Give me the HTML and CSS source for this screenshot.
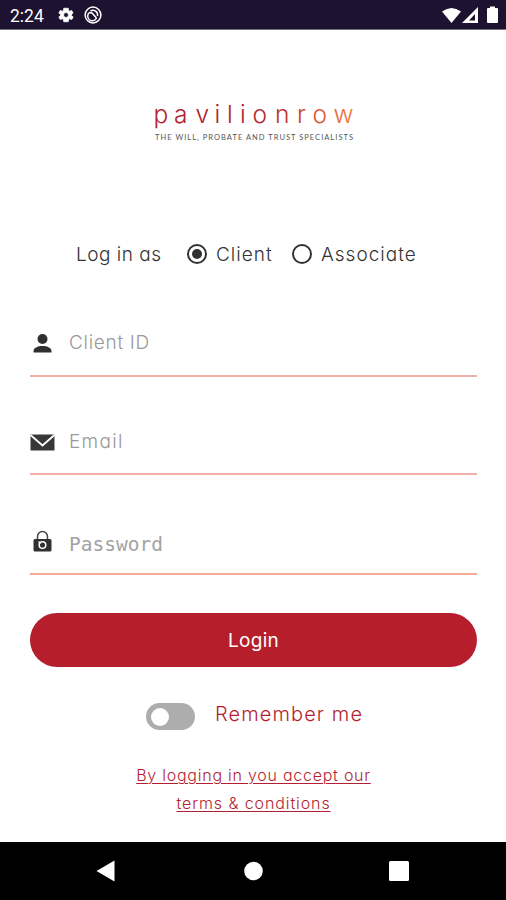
FILE: index.html
```html
<!DOCTYPE html>
<html lang="en">
<head>
<meta charset="utf-8">
<title>Pavilion Row login</title>
<link rel="stylesheet" href="styles.css">
</head>
<body>
<header class="status">
  <span class="time">2:24</span>
  <svg class="gear" width="18" height="18" viewBox="0 0 24 24"><path fill="#fff" stroke="#fff" fill-rule="evenodd" d="M19.4 13c.1-.7.1-1.300 0-2l2.100-1.600-2-3.500-2.500 1a8 8 0 0 0-1.700-1L15 3H9l-.4 2.900a8 8 0 0 0-1.700 1l-2.500-1-2 3.500L4.600 11c-.1.700-.1 1.300 0 2l-2.200 1.600 2 3.500 2.500-1a8 8 0 0 0 1.700 1L9 21h6l.4-2.900a8 8 0 0 0 1.700-1l2.500 1 2-3.500zM12 15.300a3.300 3.300 0 1 1 0-6.600 3.300 3.300 0 0 1 0 6.600z"/></svg>
  <svg class="sync" width="18" height="18" viewBox="0 0 18 18" fill="none" stroke="#fff"><circle cx="9" cy="9" r="7.900" stroke-width="1.500"/><path stroke-width="1.500" d="M5.500 6.500a4.600 4.600 0 1 0 7 5.500M5 6.500l3 .5 4.500 5M6.500 5a4.700 4.700 0 0 1 7 5"/></svg>
  <svg class="signals" width="58" height="20" viewBox="0 0 58 20"><path fill="#fff" d="M1 6.500Q10.500-.5 20 6.500L10.500 18z"/><path fill="#fff" fill-rule="evenodd" d="M37 2v16H21zM34 9l-6 6.500h6z"/><path fill="#fff" d="M47 3h2V1.500h5V3h2q1 0 1 1v13q0 1-1 1h-9q-1 0-1-1V4q0-1 1-1z"/></svg>
</header>
<main>
  <svg class="logo" width="206" height="50" viewBox="150 96 206 50" role="img">
    <defs><linearGradient id="brand" gradientUnits="userSpaceOnUse" x1="154" x2="352" y1="0" y2="0"><stop offset="0" stop-color="#b3202e"/><stop offset=".45" stop-color="#a8202c"/><stop offset=".72" stop-color="#c9382f"/><stop offset="1" stop-color="#f0793f"/></linearGradient></defs>
    <text class="name" fill="url(#brand)" y="123" x="153.500 174 195.500 214.500 227 240 252.500 275 297 312.500 333.500">pavilionrow</text>
    <text class="tagline" x="155" y="140" textLength="198">THE WILL, PROBATE AND TRUST SPECIALISTS</text>
  </svg>
  <div class="roles">
    <span class="lead">Log in as</span>
    <span class="radio on"></span><span class="client">Client</span>
    <span class="radio"></span><span class="associate">Associate</span>
  </div>
  <div class="field id">
    <svg width="25" height="24" viewBox="0 0 25 24" fill="#303030"><circle cx="12.500" cy="8" r="5"/><path d="M3.500 21.500v-1.500c0-3 4-5 9-5s9 2 9 5v1.500z"/></svg>
    <span>Client ID</span>
  </div>
  <div class="field email">
    <svg width="25" height="24" viewBox="0 0 25 24"><path fill="#383838" d="M.5 4.500h24v16H.5z"/><path fill="none" stroke="#fff" stroke-width="1.900" d="M.5 5l12 10.500L24.500 5"/></svg>
    <span>Email</span>
  </div>
  <div class="field password">
    <svg width="25" height="24" viewBox="0 0 25 24"><path fill="none" stroke="#444" stroke-width="1.500" d="M7.500 11V6.500a5 5 0 0 1 10 0V11"/><rect x="3.500" y="9" width="18" height="12.500" rx="1.500" fill="#303030"/><circle cx="12.500" cy="15" r="3.300" fill="none" stroke="#fff" stroke-width="1.500"/><path stroke="#fff" stroke-width="1.200" d="M8.500 11.500l2 2"/></svg>
    <span>Password</span>
  </div>
  <div class="login"><span>Login</span></div>
  <div class="remember"><span class="toggle"></span><span class="label">Remember me</span></div>
  <div class="terms"><div class="first">By logging in you accept our</div><div class="second">terms &amp; conditions</div></div>
</main>
<footer class="nav">
  <svg width="20" height="24" viewBox="0 0 20 24"><path fill="#fff" d="M.5 12L18.500 1.500v21z"/></svg>
  <svg width="20" height="20" viewBox="0 0 20 20"><circle cx="10.500" cy="10" r="9.300" fill="#fff"/></svg>
  <svg width="20" height="20" viewBox="0 0 20 20"><rect width="20" height="20" rx="1.500" fill="#fff"/></svg>
</footer>
</body>
</html>
```
FILE: styles.css
```css
* { box-sizing: border-box; }
body {
  margin: 0;
  height: 900px;
  display: flex;
  flex-direction: column;
  background: #fff;
  color: #333;
  font-family: Inter, sans-serif;
  font-feature-settings: "cv11", "ss03";
  font-weight: 300;
  font-size: 19px;
  white-space: nowrap;
  overflow: hidden;
}
.status {
  height: 30px;
  flex: none;
  display: flex;
  align-items: center;
  padding: 1px 7px 0 10px;
  background: #1d122f;
  border-bottom: 1px solid #77717f;
  color: #fff;
}
.time { width: 47px; font: 400 17.500px Roboto, sans-serif; padding-top: 2px; }
.sync { margin-left: 9px; }
.signals { margin-left: auto; }
main { height: 812px; flex: none; padding: 66px 29px 0 30px; }
.logo { display: block; margin-left: 120px; }
.name { font: 300 24.500px Inter, sans-serif; }
.tagline { font: 400 7.500px Lato, sans-serif; fill: #555; }
.roles { display: flex; align-items: center; height: 30px; margin: 93px 0 0 46px; }
.lead { width: 111px; letter-spacing: .5px; }
.radio { flex: none; width: 20px; height: 20px; border: 2px solid #333; border-radius: 50%; padding: 3px; }
.on::after { content: ""; display: block; width: 10px; height: 10px; border-radius: 50%; background: #303030; }
.client { width: 85px; padding-left: 9px; letter-spacing: 1px; }
.associate { padding-left: 9px; letter-spacing: 1px; }
.field {
  display: flex;
  align-items: center;
  height: 68px;
  gap: 14px;
  border-bottom: 2px solid #f0b0a6;
  color: #999;
  letter-spacing: .7px;
}
.id { margin-top: 40px; }
.id svg { margin-top: 2px; }
.email { margin-top: 30px; letter-spacing: 1.300px; }
.email svg { margin-top: 4px; }
.email span { padding-top: 2px; }
.password { margin-top: 32px; border-color: #f2ab95; letter-spacing: 0; }
.password svg { margin-top: 4px; }
.password span { padding-top: 8px; font-family: "DejaVu Sans Mono", monospace; font-size: 19.500px; color: #a3a3a3; }
.login {
  height: 54px;
  margin-top: 38px;
  border-radius: 27px;
  background: #b51e2a;
  color: #fff;
  display: flex;
  align-items: center;
  justify-content: center;
  font-weight: 400;
  letter-spacing: .3px;
}
.remember { display: flex; align-items: center; height: 28px; margin: 35px 0 0 116px; color: #b31e30; }
.toggle { width: 49px; height: 27px; border-radius: 14px; background: #adadad; padding: 5px; }
.toggle::after { content: ""; display: block; width: 18px; height: 18px; border-radius: 50%; background: #fff; }
.label { margin-left: 20px; padding-bottom: 4px; letter-spacing: 1.100px; font-size: 20px; }
.terms { margin-top: 31px; text-align: center; line-height: 28px; font-size: 16px; letter-spacing: .75px; color: #b31e30; text-decoration: underline; text-decoration-thickness: 1px; text-underline-offset: 2px; }
.second { letter-spacing: .9px; }
.nav { height: 58px; flex: none; display: flex; align-items: center; justify-content: space-between; padding: 0 97px 0 96px; background: #000; }
```
